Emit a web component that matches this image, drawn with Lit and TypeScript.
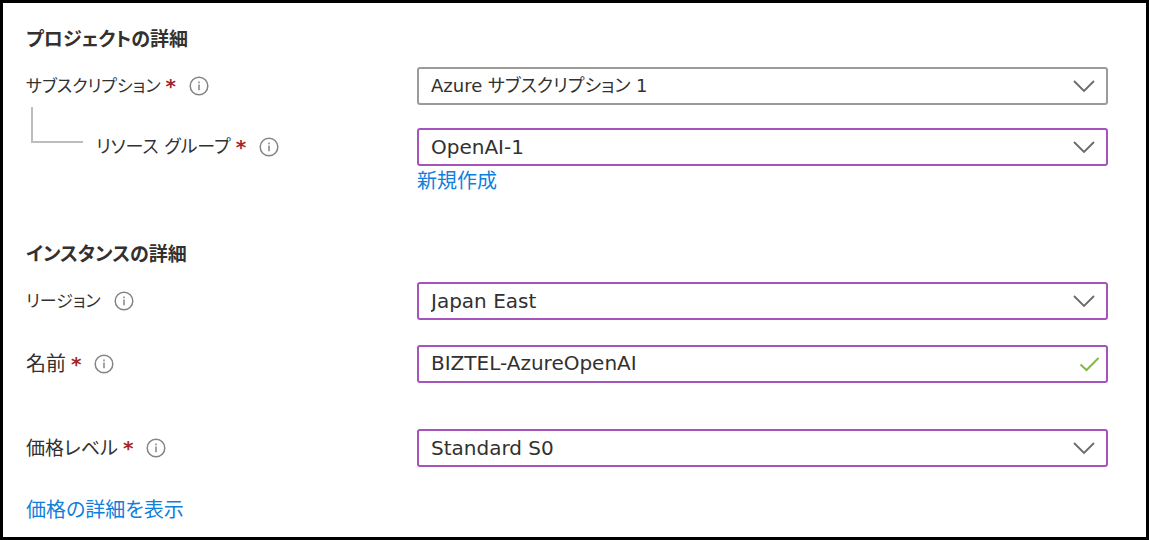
import { LitElement, html, css, svg, nothing } from "lit";
import { customElement } from "lit/decorators.js";
import { classMap } from "lit/directives/class-map.js";

interface Field {
  id: string;
  label: string;
  value: string;
  size: "xs" | "sm" | "md" | "lg";
  required?: boolean;
  nested?: boolean;
  plain?: boolean;
  text?: boolean;
  link?: string;
}

const project: Field[] = [
  { id: "subscription", label: "サブスクリプション", value: "Azure サブスクリプション 1", size: "xs", required: true, plain: true },
  { id: "group", label: "リソース グループ", value: "OpenAI-1", size: "sm", required: true, nested: true, link: "新規作成" },
];

const instance: Field[] = [
  { id: "region", label: "リージョン", value: "Japan East", size: "xs" },
  { id: "name", label: "名前", value: "BIZTEL-AzureOpenAI", size: "lg", required: true, text: true },
];

const pricing: Field[] = [
  { id: "tier", label: "価格レベル", value: "Standard S0", size: "md", required: true },
];

@customElement("app-root")
export class AppRoot extends LitElement {
  static styles = css`
    :host {
      display: block;
      color: #323130;
      font-family: "DejaVu Sans", "Noto Sans CJK JP", sans-serif;
      font-size: 20px;
      line-height: 30px;
      font-feature-settings: "palt";
    }
    * { box-sizing: border-box; }
    .page {
      min-height: 100vh;
      border: 3px solid #000;
      background: #fff;
      padding: 21px 38px 8px 23px;
    }
    .title {
      margin: 0 0 13px;
      font-size: 19px;
      line-height: 30px;
      font-weight: 700;
    }
    .section { display: flex; flex-direction: column; }
    .instance { margin-top: 43px; }
    .rows { display: flex; flex-direction: column; gap: 23px; }
    .instance .rows { gap: 25px; }
    .pricing { margin-top: 46px; }
    .row {
      display: grid;
      grid-template-columns: 391px minmax(0, 1fr);
      align-items: start;
    }
    .caption { display: flex; align-items: center; height: 38px; }
    .xs { font-size: 17px; }
    .sm { font-size: 18px; }
    .md { font-size: 19px; }
    .lg { font-size: 20px; }
    .elbow {
      align-self: flex-start;
      width: 52px;
      height: 36px;
      margin: -21px 13px 0 5px;
      border: solid #bdbdbd;
      border-width: 0 0 2px 2px;
    }
    .star { margin-left: 5px; color: #a4262c; font-weight: 700; }
    .info {
      display: flex;
      margin-left: 13px;
      padding: 0;
      border: 0;
      background: none;
    }
    .control { display: grid; align-items: center; }
    .control > * { grid-area: 1 / 1; }
    .input {
      appearance: none;
      width: 100%;
      height: 38px;
      margin: 0;
      padding: 0 48px 0 12px;
      border: 2px solid #a554bb;
      border-radius: 3px;
      outline: 0;
      background: #fff;
      color: inherit;
      font: inherit;
      font-feature-settings: inherit;
    }
    input.input { padding-bottom: 2px; }
    .plain { border-color: #9c9b9a; font-size: 18px; }
    .mark { justify-self: end; margin-right: 13px; pointer-events: none; }
    .tick { margin-right: 8px; }
    .link { display: block; width: fit-content; color: #0f7fdc; text-decoration: none; }
    .more { margin-top: 28px; }
  `;

  private info(label: string) {
    return html`<button class="info" type="button" aria-label="${label}">
      <svg width="20" height="20" viewBox="0 0 20 20" fill="none">
        <circle cx="10" cy="10" r="8.8" stroke="#858483" stroke-width="1.5" />
        <path d="M10 8.4v5.8M10 5.4v1.8" stroke="#9a9998" stroke-width="1.8" />
      </svg>
    </button>`;
  }

  private mark(text?: boolean) {
    return html`<svg class=${classMap({ mark: true, tick: !!text })} width="22" height="16" viewBox="0 0 22 16" fill="none">
      ${text
        ? svg`<path d="M2.5 8.5L8.5 14L20.5 2" stroke="#7fba42" stroke-width="2" />`
        : svg`<path d="M1 3L11 13L21 3" stroke="#6b6a69" stroke-width="1.8" />`}
    </svg>`;
  }

  private row(f: Field) {
    const classes = classMap({ input: true, plain: !!f.plain });
    return html`<div class="row">
      <div class="caption">
        ${f.nested ? html`<span class="elbow"></span>` : nothing}
        <label class=${f.size} for=${f.id}>${f.label}</label>
        ${f.required ? html`<span class="star">*</span>` : nothing}
        ${this.info(f.label)}
      </div>
      <div>
        <div class="control">
          ${f.text
            ? html`<input class=${classes} id=${f.id} type="text" .value=${f.value} />`
            : html`<select class=${classes} id=${f.id}><option>${f.value}</option></select>`}
          ${this.mark(f.text)}
        </div>
        ${f.link ? html`<a class="link" href="#">${f.link}</a>` : nothing}
      </div>
    </div>`;
  }

  render() {
    return html`<main class="page">
      <section class="section">
        <h2 class="title">プロジェクトの詳細</h2>
        <div class="rows">${project.map((f) => this.row(f))}</div>
      </section>
      <section class="section instance">
        <h2 class="title">インスタンスの詳細</h2>
        <div class="rows">${instance.map((f) => this.row(f))}</div>
      </section>
      <section class="section pricing">
        ${pricing.map((f) => this.row(f))}
        <div class="more"><a class="link" href="#">価格の詳細を表示</a></div>
      </section>
    </main>`;
  }
}
